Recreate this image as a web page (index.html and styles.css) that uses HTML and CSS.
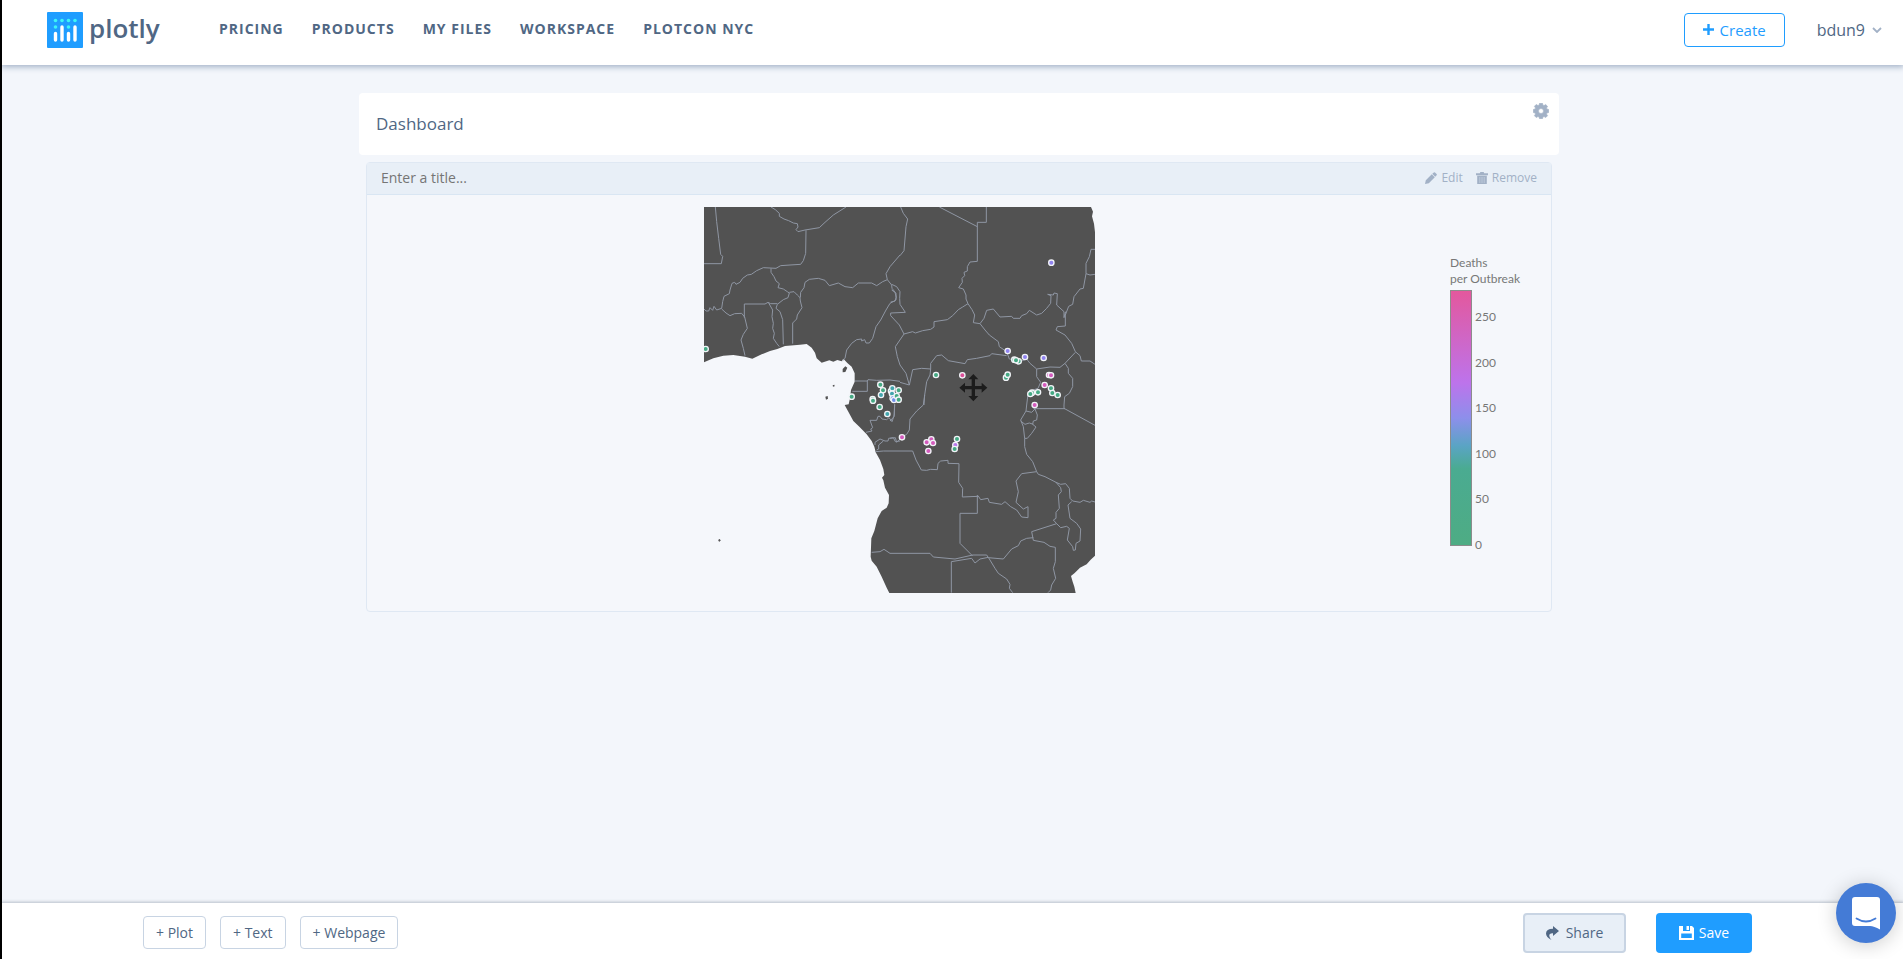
FILE: index.html
```html
<!DOCTYPE html>
<html lang="en">
<head>
<meta charset="utf-8">
<title>Dashboard</title>
<link rel="stylesheet" href="styles.css">
</head>
<body>
<header class="topbar">
  <a class="logo" href="#">
    <svg class="logo-mark" viewBox="0 0 36 36" aria-hidden="true">
      <rect width="36" height="36" rx="1" fill="#1f9dff"/>
      <g fill="#3df5f5"><circle cx="8.500" cy="8.500" r="1.800"/><circle cx="15" cy="8.500" r="1.800"/><circle cx="21.500" cy="8.500" r="1.800"/><circle cx="28" cy="8.500" r="1.800"/><circle cx="8.500" cy="15" r="1.800"/><circle cx="21.500" cy="15" r="1.800"/></g>
      <path d="M8.500 21.500v6.500M15 15v13M21.500 21.500v6.500M28 15v13" stroke="#fff" stroke-width="3.400" stroke-linecap="round"/>
    </svg>
    <span>plotly</span>
  </a>
  <nav class="nav">
    <a href="#">PRICING</a>
    <a href="#">PRODUCTS</a>
    <a href="#">MY FILES</a>
    <a href="#">WORKSPACE</a>
    <a href="#">PLOTCON NYC</a>
  </nav>
  <button class="create" type="button">
    <svg width="11" height="11" viewBox="0 0 11 11" aria-hidden="true"><path d="M5.500 0v11M0 5.500h11" stroke="#1f9dff" stroke-width="2.400"/></svg>
    Create
  </button>
  <button class="user" type="button">bdun9
    <svg width="10" height="6" viewBox="0 0 10 6" aria-hidden="true"><path d="M1 1l4 4 4-4" fill="none" stroke="#a2b1c6" stroke-width="1.800"/></svg>
  </button>
</header>

<main class="page">
  <div class="board">
    <section class="title-card">
      <input class="board-title" type="text" value="Dashboard" aria-label="Dashboard title">
      <button class="settings" type="button" aria-label="Settings">
        <svg width="16" height="16" viewBox="0 0 16 16" aria-hidden="true">
          <path fill="#a2b1c6" stroke="#a2b1c6" stroke-width=".6" stroke-linejoin="round" fill-rule="evenodd" d="M6.500.3h3l.5 1.900 1 .4 1.700-1.100 1.900 1.900L13.500 5l.4 1 1.800.5v3l-1.800.5-.4 1 1.100 1.700-1.900 1.900L11 13.500l-1 .4-.5 1.800h-3L6 13.900l-1-.4-1.700 1.100-1.900-1.900L2.500 11l-.4-1-1.800-.5v-3L2.100 6l.4-1-1.100-1.700 1.900-1.900L5 2.600l1-.4zM8 5.500a2.500 2.500 0 1 0 0 5 2.500 2.500 0 0 0 0-5z"/>
        </svg>
      </button>
    </section>

    <section class="panel">
      <div class="panel-head">
        <input class="panel-title" type="text" placeholder="Enter a title..." aria-label="Plot title">
        <button class="tool" type="button">
          <svg width="12" height="12" viewBox="0 0 12 12" aria-hidden="true"><path fill="#a2b1c6" d="M0 12l.8-3.800 6-5.900 3 3-6 5.900zM7.300 1.800L8.800.5q.6-.5 1.200 0l1.600 1.600q.5.600 0 1.200l-1.400 1.500z"/></svg>
          Edit
        </button>
        <button class="tool" type="button">
          <svg width="12" height="12" viewBox="0 0 12 12" aria-hidden="true"><path fill="#a2b1c6" d="M0 1.200h3.800L4.400 0h3.200l.6 1.200H12v2H0zM1.200 3.800h9.600V12H1.200z"/><path d="M3.800 5v6M6 5v6M8.200 5v6" stroke="#c9d4e3" stroke-width=".7"/></svg>
          Remove
        </button>
      </div>
      <div class="plot">
        <svg class="map" viewBox="0 0 1173 1158" role="img" aria-label="Map of outbreaks in Africa">
          <path class="land" d="M0 0H1161L1167 14 1164 28 1170 50 1173 76V1046L1160 1058 1148 1072 1128 1082 1112 1098 1101 1107 1106 1124 1111 1139 1115 1158H556L548 1142 533 1109 518 1079 503 1061 500 1049 502 994 511 972 521 934 533 912 548 902 554 889 555 864 543 842 538 820 534 812 541 804 538 786 528 759 515 736 511 719 503 702 488 682 466 659 448 642 433 614 422 594 434 592 438 574 441 549 452 524 452 499 443 479 430 468 418 455 413 463 400 459 388 464 376 460 353 467 338 454 333 437 323 422 308 411 288 413 243 417 220 426 198 432 173 442 145 455 123 449 88 444 58 446 28 454 0 466Z"/>
          <g transform="translate(-42 -36)">
            <path class="land" d="M458 522l8-8 6 4-6 13-8 1zM428 571l5-2 1 5-5 1zM406 605l7-2 1 8-6 3z"/>
            <path class="border" d="M76 36L80 80 86 130 92 178 98 184 94 206 42 206M243 36L256 44 268 55 268 64 282 72 296 77 310 84 322 86 324 96 318 104 324 110 345 105 388 98 405 82 430 60 468 36M348 106L347 175 340 197 332 208 300 210 272 212 258 220 220 218 200 227 184 238 172 240 158 250 150 262 138 268 134 262 126 265 120 285 118 296 102 304 98 320 95 340 80 345 72 334 68 346 60 338 56 348 48 348 42 342M95 342L108 354 120 362 134 356 155 355 164 366 172 400 160 418 153 435 160 460 165 482M243 220L243 232 252 245 258 258 268 266 264 278 280 282 292 290 298 294 294 308 280 314 262 328 258 340 270 350 278 374 280 448M163 368V327H225L234 322 242 326 262 326M236 324L248 345 246 365 250 385 248 400 253 415 250 430 260 445 268 455M298 292L312 290 322 300 330 308 331 318 336 338 322 360 320 372 308 384 308 446M331 308L332 292 342 278 345 262 358 253 385 250 405 256 418 272 445 264 465 275 488 278 505 264 545 264 560 272 578 260 592 254 588 236 600 215 630 180M592 254L605 270 606 280 618 295 618 315 600 325 588 345 572 375 558 395 548 430 538 444 528 444 524 434 515 438 515 432 500 434 485 445 470 465 465 490 458 497M495 558H532L534 554 560 556 600 555 630 559M532 558V589H487"/>
          </g>
          <g transform="translate(558 -36)">
            <path class="border" d="M32 36L40 55 53 72 48 95 42 167 30 182M5 268L20 275 30 290 29 310 30 328 46 352 2 354 2 362 28 390 42 417M5 285L15 292 19 307 14 319 2 321M42 417L16 455 22 485 30 510 48 535 58 570 30 562M148 36L262 95M289 36V82H262V199L240 201 232 215 232 228 222 232 224 242 216 250 217 262 206 278 220 282 228 300 228 312 234 326M42 417L68 410 76 414 98 407 122 403 132 396 132 380 172 374 188 362 205 344 218 336 234 326 246 344 254 360 250 383 270 386 282 370 290 346 310 342 330 366 365 364 370 370 390 370 395 362 410 356 418 346 440 360 455 355 470 340 482 325 483 302 473 298 490 300 492 294 502 296 500 330 522 350 522 368 527 350M615 163H603L598 185 588 205 588 236 580 280 570 282 552 305 548 328 536 334 526 360 526 393 502 395 498 405 525 420 545 445 556 470 570 482 574 498 600 498 615 508M588 236L600 240 615 238M556 472L525 505 510 517 480 516 440 522M270 386L285 405 298 420 325 440 328 455 350 470 358 492 395 498 410 492 420 505 440 522 440 545 452 562 444 580 415 590 410 630M58 570L68 524 95 520 122 522 122 505 140 482 155 480 175 497 225 506 232 494 260 490 300 482 305 476 350 482M122 522L120 540 110 560 104 600 102 630M525 505L535 520 535 535 548 550 548 575 538 595 524 605 522 630"/>
          </g>
          <g transform="translate(-42 564)">
            <path class="border" d="M545 472L570 470 582 463 600 475H630M557 170L580 168H630M555 150V142L570 132 585 138 594 138 596 130 610 128 616 140 630 138M560 165L566 162 566 150 580 138M528 112L546 108 542 102 548 98 540 76 560 76 564 64 570 64 576 72 590 74 597 68 606 80 613 60 614 28"/>
            <path class="islet" d="M85 436h7M88 432v8"/>
          </g>
          <g transform="translate(558 564)">
            <path class="border" d="M104 0L100 30 80 48 60 72 58 105 50 118 38 125 20 142 16 128 0 130M14 28L12 65 0 78M410 30L408 48 392 75 400 95 404 130 404 155 410 178 428 200 440 230M522 30V40L615 91M430 41H525M408 48L425 52 435 42 442 60 440 75 430 78 428 88 438 96 425 115 412 130 404 130M392 78L405 88 418 84 430 88M30 168H68L78 195 94 225 110 226 122 223 142 224 144 205 152 198 174 196 174 205 207 206 206 262 218 280 217 306 264 304M262 300V355H210V445L248 483M264 302L272 314 294 310 298 322 335 328 345 320 362 335 380 345 395 366 414 368 414 335 400 342 378 322 385 290 378 258 395 236 440 230 445 238 465 245 498 262 512 278 514 290 505 300 508 340 498 352 498 370 490 375 500 386M498 262L512 268 527 266 538 280 540 310 548 318 570 322 580 316 600 322 605 318 615 321M545 320L534 330 540 370 560 385 572 402 570 438 558 445 556 465 550 466 548 455 532 435 538 400 530 394 512 398 500 386 425 410 430 436 462 442 480 454 496 457 496 500 490 520 497 550 485 570 482 585 474 593M430 428L410 430 392 438 385 452 365 462 340 492 295 488 290 480 248 480 195 492 130 486 120 475H30M184 593V500L245 490 255 504 270 492 295 487 315 520 325 535 350 552 360 568 358 580 368 593"/>
          </g>
          <g class="dots" transform="translate(-42 -36)">
            <g class="low"><circle cx="47" cy="462" r="8"/><circle cx="485" cy="605" r="8"/><circle cx="548" cy="612" r="8"/><circle cx="549" cy="617" r="8"/><circle cx="571" cy="569" r="8"/><circle cx="579" cy="586" r="8"/><circle cx="569" cy="636" r="8"/></g>
            <g class="mid"><circle cx="573" cy="600" r="8"/><circle cx="592" cy="657" r="8"/><circle cx="603" cy="588" r="8"/><circle cx="607" cy="580" r="8"/><circle cx="606" cy="596" r="8"/></g>
            <g class="blue"><circle cx="608" cy="610" r="8"/><circle cx="612" cy="615" r="8"/></g>
            <g class="low"><circle cx="626" cy="586" r="8"/><circle cx="620" cy="603" r="8"/><circle cx="626" cy="614" r="8"/></g>
          </g>
          <g class="dots" transform="translate(558 -36)">
            <g class="violet"><circle cx="484" cy="203" r="8"/><circle cx="353" cy="468" r="8"/><circle cx="405" cy="486" r="8"/><circle cx="461" cy="489" r="8"/></g>
            <g class="low"><circle cx="386" cy="499" r="8"/><circle cx="373" cy="494" r="8"/><circle cx="378" cy="496" r="8"/><circle cx="348" cy="548" r="8"/><circle cx="353" cy="539" r="8"/><circle cx="138" cy="540" r="8"/><circle cx="483" cy="580" r="8"/><circle cx="487" cy="594" r="8"/><circle cx="503" cy="600" r="8"/><circle cx="444" cy="592" r="8"/><circle cx="426" cy="593" r="8"/><circle cx="421" cy="597" r="8"/></g>
            <g class="magenta"><circle cx="477" cy="540" r="8"/><circle cx="483" cy="541" r="8"/><circle cx="464" cy="570" r="8"/><circle cx="434" cy="630" r="8"/></g>
            <g class="pink"><circle cx="217" cy="541" r="8"/></g>
          </g>
          <g class="dots" transform="translate(558 564)">
            <g class="magenta"><circle cx="36" cy="127" r="8"/><circle cx="124" cy="133" r="8"/><circle cx="110" cy="142" r="8"/><circle cx="129" cy="144" r="8"/><circle cx="115" cy="168" r="8"/></g>
            <g class="low"><circle cx="201" cy="132" r="8"/></g>
            <g class="purple"><circle cx="196" cy="150" r="8"/></g>
            <g class="low"><circle cx="194" cy="162" r="8"/></g>
          </g>
          <path fill="#1c1c1c" transform="translate(808 542)" d="M0-41L15-25H5V-5H25V-15L42 0 25 15V5H5V25H15L0 41-15 25H-5V5H-25V15L-42 0-25-15V-5H-5V-25H-15Z"/>
        </svg>
        <div class="legend">
          <div class="legend-title">Deaths<br>per Outbreak</div>
          <div class="legend-scale">
            <div class="colorbar"></div>
            <div class="ticks"><span>250</span><span>200</span><span>150</span><span>100</span><span>50</span><span>0</span></div>
          </div>
        </div>
      </div>
    </section>
  </div>
</main>

<footer class="bottombar">
  <button class="add" type="button">+ Plot</button>
  <button class="add" type="button">+ Text</button>
  <button class="add" type="button">+ Webpage</button>
  <button class="share" type="button">
    <svg width="13" height="14" viewBox="0 0 13 14" aria-hidden="true"><path fill="#506784" d="M7 0l6 5-6 5V7.200Q3 7 3.300 10q.3 2 2.200 4Q0 11 0 7.500 0 3 7 2.800z"/></svg>
    Share
  </button>
  <button class="save" type="button">
    <svg width="15" height="14" viewBox="0 0 15 14" aria-hidden="true"><path fill="#fff" fill-rule="evenodd" d="M0 0h4v5h7V0h2l2 2v12H0zM2.200 7.500v4.500h10.600V7.500z"/><path fill="#fff" d="M7.500 0H10v4H7.500z"/></svg>
    Save
  </button>
</footer>

<button class="chat" type="button" aria-label="Open chat">
  <svg width="28" height="33" viewBox="0 0 28 33" aria-hidden="true"><path fill="#fff" d="M3 0h22q3 0 3 3v29.500Q22 29 18 29H3q-3 0-3-3V3q0-3 3-3z"/><path d="M4.500 21.500q9.500 6 19 0" fill="none" stroke="#447bd6" stroke-width="1.800" stroke-linecap="round"/></svg>
</button>
</body>
</html>
```
FILE: styles.css
```css
* {
  box-sizing: border-box;
}

body {
  margin: 0;
  min-height: 100vh;
  display: flex;
  flex-direction: column;
  border-left: 2px solid #000;
  background: #f3f6fb;
  color: #506784;
  font-family: "Open Sans", "Noto Sans", sans-serif;
  font-size: 14px;
}

button,
input {
  margin: 0;
  padding: 0;
  border: 0;
  background: none;
  color: inherit;
  font: inherit;
}

button {
  display: flex;
  align-items: center;
  justify-content: center;
}

a {
  color: inherit;
  text-decoration: none;
}

.topbar {
  display: flex;
  align-items: center;
  height: 65px;
  padding: 0 21px 6px 45px;
  background: #fff;
  box-shadow: 0 1px 6px 1px #a2b1c6;
}

.logo {
  display: flex;
  align-items: center;
  gap: 6px;
  width: 172px;
  font-family: "Open Sans", sans-serif;
  font-size: 26px;
  font-weight: 600;
  line-height: 36px;
}

.logo span {
  padding-bottom: 4px;
}

.logo-mark {
  width: 36px;
  height: 36px;
}

.nav {
  display: flex;
  gap: 28px;
  padding-bottom: 2px;
  font-weight: 700;
  letter-spacing: 1px;
  line-height: 20px;
}

.create {
  gap: 6px;
  width: 101px;
  height: 34px;
  margin-left: auto;
  border: 1px solid #1f9dff;
  border-radius: 4px;
  color: #1f9dff;
  font-size: 15px;
}

.user {
  gap: 7px;
  margin-left: 32px;
  font-size: 16px;
}

.page {
  flex: 1;
  padding: 28px 16px 28px 29px;
}

.board {
  max-width: 1200px;
  margin: 0 auto;
}

.title-card {
  display: flex;
  align-items: flex-start;
  justify-content: space-between;
  padding: 10px;
  border-radius: 4px;
  background: #fff;
}

.board-title {
  flex: 1;
  height: 42px;
  padding: 0 0 2px 7px;
  font-size: 17px;
}

.panel {
  margin: 7px 7px 0;
  border: 1px solid #dfe8f3;
  border-radius: 4px;
  background: #f5f7fb;
}

.panel-head {
  display: flex;
  align-items: center;
  gap: 13px;
  height: 32px;
  padding: 0 14px 2px;
  border-bottom: 1px solid #d9e6f3;
  background: #e8eff7;
}

.panel-title {
  flex: 1;
}

.panel-title::placeholder {
  color: #757575;
}

.tool {
  gap: 4px;
  color: #a2b1c6;
  font-size: 12px;
}

.plot {
  display: grid;
  grid-template-columns: 1fr 119px;
  padding: 12px 0 18px;
}

.map {
  width: 391px;
  height: 386px;
  justify-self: center;
}

.land {
  fill: #525252;
}

.border {
  fill: none;
  stroke: #8f96a3;
  stroke-width: 3;
}

.islet {
  stroke: #525252;
  stroke-width: 3;
}

.dots {
  stroke: #f2f4f8;
  stroke-width: 4;
}

.low { fill: #45a983; }
.mid { fill: #43a5ad; }
.blue { fill: #6f8fe8; }
.violet { fill: #9183f0; }
.purple { fill: #b877ea; }
.magenta { fill: #d45bbd; }
.pink { fill: #dc5099; }

.legend {
  padding: 48px 0 0 18px;
  color: #777;
  font-family: Lato, "Open Sans", sans-serif;
  font-size: 12px;
}

.legend-title {
  height: 35px;
  line-height: 16px;
}

.legend-scale {
  display: flex;
  gap: 3px;
}

.colorbar {
  width: 22px;
  height: 256px;
  border: 1px solid #8c8c8c;
  background: linear-gradient(#e3589d, #bd73eb 36%, #8d8feb 50%, #5aa4c4 61%, #4aab91 70%, #4eac84);
}

.ticks {
  display: flex;
  flex-direction: column;
  justify-content: space-between;
  height: 246px;
  margin-top: 18px;
  line-height: 18px;
}

.bottombar {
  display: flex;
  align-items: center;
  gap: 14px;
  height: 56px;
  padding: 3px 151px 0 141px;
  background: #fff;
  box-shadow: 0 0 3px 1px #b5bdc8;
}

.add {
  height: 33px;
  padding: 0 12px;
  border: 1px solid #c8d4e3;
  border-radius: 4px;
}

.share,
.save {
  gap: 7px;
  height: 40px;
  border-radius: 4px;
}

.share {
  width: 103px;
  margin-left: auto;
  border: 2px solid #c8d4e3;
  background: #e8eff7;
}

.save {
  gap: 5px;
  width: 96px;
  margin-left: 16px;
  background: #1f9dff;
  color: #fff;
}

.chat {
  position: fixed;
  right: 7px;
  bottom: 16px;
  width: 60px;
  height: 60px;
  border-radius: 50%;
  background: #447bd6;
  box-shadow: 0 2px 20px rgba(0, 0, 0, 0.2);
}
```
